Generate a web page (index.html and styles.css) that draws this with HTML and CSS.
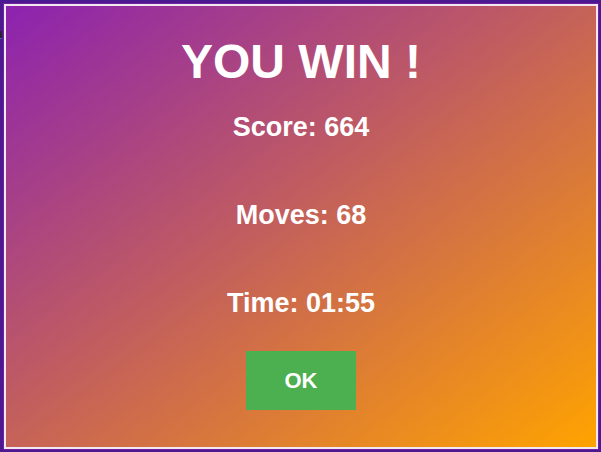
FILE: index.html
```html
<!DOCTYPE html>
<html>
<head>
<meta charset="utf-8">
<link rel="stylesheet" href="styles.css">
</head>
<body>
<span class="behind"></span>
<div class="modal">
  <h1 class="title">YOU WIN !</h1>
  <p class="stat">Score: 664</p>
  <p class="stat">Moves: 68</p>
  <p class="stat">Time: 01:55</p>
  <button class="ok">OK</button>
</div>
</body>
</html>
```

FILE: styles.css
```css
html, body {
  margin: 0;
  height: 100%;
}
body {
  background: #4b1a91;
  padding: 4px 3px 3px 4px;
  box-sizing: border-box;
  font-family: "Liberation Sans", Arial, sans-serif;
  position: relative;
  overflow: hidden;
}
.behind {
  position: absolute;
  left: 0;
  top: 31px;
  width: 2px;
  height: 7px;
  background: #2a2030;
  border-bottom: 1px solid #3a6ab0;
}
.modal {
  position: relative;
  height: 100%;
  box-sizing: border-box;
  border: 2px solid #f1e9ef;
  box-shadow: 0 0 0 1px rgba(142, 36, 170, 0.6);
  background: linear-gradient(to bottom right, #8c22b0, #ffa300);
  display: flex;
  flex-direction: column;
  align-items: center;
  color: #fff;
  padding-top: 28px;
}
.title {
  margin: 0 0 23px;
  font-size: 48px;
  font-weight: bold;
  line-height: 55px;
}
.stat {
  margin: 0 0 57px;
  font-size: 27px;
  font-weight: bold;
  line-height: 31px;
}
.stat:last-of-type {
  margin-bottom: 32px;
}
.ok {
  width: 110px;
  height: 59px;
  background: #4caf50;
  color: #fff;
  border: none;
  font-family: "Liberation Sans", Arial, sans-serif;
  font-size: 22px;
  font-weight: bold;
  padding: 0;
}
```
